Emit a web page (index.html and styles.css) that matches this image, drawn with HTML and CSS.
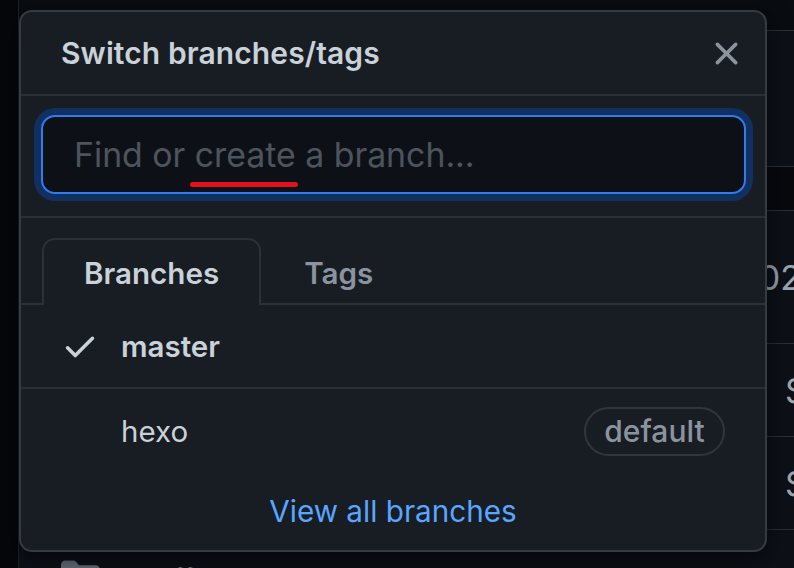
FILE: index.html
```html
<!DOCTYPE html>
<html lang="en">
<head>
<meta charset="utf-8">
<title>Switch branches/tags</title>
<link rel="stylesheet" href="styles.css">
</head>
<body>
<div class="page">
  <div class="page-top"></div>
  <div class="page-block"></div>
  <div class="page-gap"></div>
  <div class="file-row tall"><span class="cell-date">2022</span></div>
  <div class="file-row"><span class="cell-msg">Sync</span></div>
  <div class="file-row"><span class="cell-msg">Sync</span></div>
  <div class="file-row last">
    <svg class="folder" viewBox="0 0 16 16" width="39" height="39"><path fill="currentColor" d="M1.75 1A1.75 1.75 0 0 0 0 2.75v10.5C0 14.216.784 15 1.75 15h12.5A1.75 1.75 0 0 0 16 13.25v-8.5A1.75 1.75 0 0 0 14.25 3H7.5a.25.25 0 0 1-.2-.1l-.9-1.2C6.07 1.26 5.55 1 5 1H1.75Z"/></svg>
    <span class="folder-name">scaffolds</span>
  </div>
</div>

<div class="popup">
  <div class="popup-header">
    <span class="popup-title">Switch branches/tags</span>
    <svg class="close" viewBox="0 0 16 16" width="39" height="39"><path fill="currentColor" d="M3.72 3.72a.75.75 0 0 1 1.060 0L8 6.94l3.22-3.22a.749.749 0 0 1 1.275.326.749.749 0 0 1-.215.734L9.06 8l3.220 3.22a.749.749 0 0 1-.326 1.275.749.749 0 0 1-.734-.215L8 9.06l-3.22 3.22a.751.751 0 0 1-1.042-.018.751.751 0 0 1-.018-1.042L6.94 8 3.72 4.78a.75.75 0 0 1 0-1.06Z"/></svg>
  </div>
  <div class="popup-search">
    <div class="search-input"><span class="placeholder">Find or <span class="marked">create</span> a branch...</span></div>
  </div>
  <div class="tabs">
    <div class="tab active">Branches</div>
    <div class="tab">Tags</div>
  </div>
  <div class="branch-row sep">
    <svg class="check" viewBox="0 0 16 16" width="38" height="38"><path fill="currentColor" d="M13.78 4.22a.75.75 0 0 1 0 1.06l-7.25 7.25a.75.75 0 0 1-1.06 0L2.22 9.28a.751.751 0 0 1 .018-1.042.751.751 0 0 1 1.042-.018L6 10.94l6.72-6.72a.75.75 0 0 1 1.06 0Z"/></svg>
    <span class="branch-name selected">master</span>
  </div>
  <div class="branch-row">
    <span class="check-space"></span>
    <span class="branch-name">hexo</span>
    <span class="badge">default</span>
  </div>
  <div class="popup-footer">
    <span class="view-all">View all branches</span>
  </div>
</div>
</body>
</html>
```
FILE: styles.css
```css
* { box-sizing: border-box; }

body {
  margin: 0;
  width: 794px;
  height: 568px;
  overflow: hidden;
  position: relative;
  background: #05070a;
  font-family: Inter, "Liberation Sans", "Noto Sans", sans-serif;
  color: #c9d1d9;
}

/* background page */
.page {
  margin-left: 18px;
  height: 568px;
  overflow: hidden;
  border-left: 1px solid #1f242b;
  background: #0d1117;
  display: flex;
  flex-direction: column;
}
.page-top {
  height: 31px;
  flex: none;
  background: #090c10;
  border-bottom: 1px solid #2b3138;
}
.page-block {
  height: 136px;
  flex: none;
  border-bottom: 1px solid #2b3138;
}
.page-gap {
  height: 44px;
  flex: none;
  background: #07090d;
  border-bottom: 1px solid #2b3138;
}
.file-row {
  height: 93px;
  flex: none;
  display: flex;
  align-items: center;
  border-bottom: 1px solid #2b3138;
  font-size: 34px;
  color: #9ea7b3;
  white-space: nowrap;
}
.file-row.tall { height: 133px; }
.cell-date { padding-left: 719px; }
.cell-msg { padding-left: 766px; }
.file-row.last {
  align-items: flex-start;
  padding: 28px 0 0 42px;
  border-bottom: 0;
  gap: 22px;
}
.folder { color: #6e7681; flex: none; }
.folder-name { font-size: 30px; color: #c9d1d9; margin-top: 4px; }

/* popup */
.popup {
  position: absolute;
  left: 19px;
  top: 10px;
  width: 748px;
  height: 542px;
  border: 2px solid #363b43;
  border-radius: 13px;
  background: #181c23;
  box-shadow: 0 8px 24px rgba(1, 4, 9, 0.7);
  display: flex;
  flex-direction: column;
}
.popup-header {
  height: 84px;
  flex: none;
  display: flex;
  align-items: center;
  justify-content: space-between;
  padding: 0 19px 0 40px;
  border-bottom: 2px solid #2a2e35;
}
.popup-title {
  font-size: 30px;
  font-weight: 600;
  color: #c9d1d9;
  letter-spacing: 0.1px;
}
.close { color: #8b949e; }

.popup-search {
  height: 122px;
  flex: none;
  padding: 19px 19px 0 20px;
  border-bottom: 2px solid #2a2e35;
}
.search-input {
  height: 79px;
  border: 2.5px solid #2f7bf0;
  border-radius: 14px;
  background: #0d1117;
  box-shadow: 0 0 0 7px #11305f;
  display: flex;
  align-items: center;
  padding-left: 31px;
}
.placeholder {
  font-size: 33.8px;
  color: #4d545d;
  white-space: nowrap;
}
.marked { position: relative; }
.marked::after {
  content: "";
  position: absolute;
  left: -5px;
  right: -2px;
  bottom: -12px;
  height: 5px;
  border-radius: 3px;
  background: #e3101e;
}

.tabs {
  height: 87px;
  flex: none;
  display: flex;
  align-items: flex-end;
  padding-left: 21px;
  border-bottom: 2px solid #2c3138;
}
.tab {
  height: 67px;
  margin-bottom: -2px;
  padding: 0 40px;
  display: flex;
  align-items: center;
  font-size: 29.6px;
  font-weight: 600;
  color: #8b949e;
  border: 2px solid transparent;
  border-bottom: 0;
  border-radius: 13px 13px 0 0;
}
.tab.active {
  color: #c9d1d9;
  background: #181c23;
  border-color: #2c3138;
}
.tab + .tab { padding-left: 41px; }

.branch-row {
  height: 84px;
  flex: none;
  display: flex;
  align-items: center;
  padding: 0 40px 0 40px;
  gap: 22px;
}
.branch-row.sep {
  height: 84px;
  border-bottom: 2px solid #2a2e35;
}
.check { color: #c9d1d9; flex: none; }
.check-space { width: 38px; flex: none; }
.branch-name {
  font-size: 29.5px;
  color: #c9d1d9;
  flex: 1;
}
.branch-name.selected { font-weight: 600; }
.badge {
  height: 49px;
  width: 141px;
  border: 2px solid #30363d;
  border-radius: 25px;
  display: flex;
  align-items: center;
  justify-content: center;
  font-size: 30px;
  font-weight: 500;
  color: #8b949e;
}

.popup-footer {
  flex: 1;
  display: flex;
  align-items: center;
  justify-content: center;
  padding-bottom: 2px;
}
.view-all {
  font-size: 29.7px;
  color: #58a6ff;
}
```
